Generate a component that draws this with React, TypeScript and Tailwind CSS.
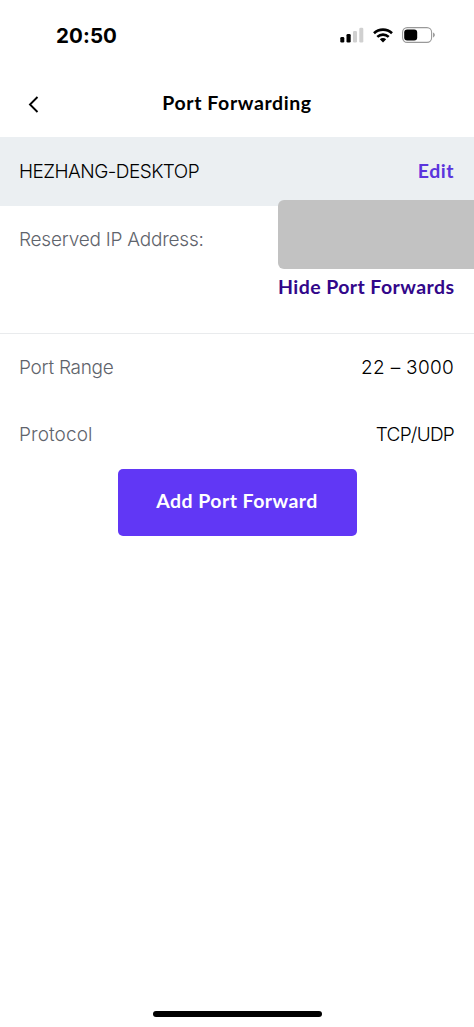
import type { ReactNode } from 'react';

type RowProps = {
  label: string;
  labelClass: string;
  value: string;
  valueClass: string;
};

function StatusBar() {
  return (
    <div className="flex h-[70px] items-center justify-between pl-14 pr-[38px]">
      <span className="pt-px font-['Inter',sans-serif] text-[20.5px] font-bold leading-6 tracking-[0.1px]">
        20:50
      </span>
      <div className="flex items-center">
        <svg width="25" height="16" viewBox="0 0 25 16">
          <rect x="0.3" y="10" width="4" height="5.6" rx="1.3" fill="#000" />
          <rect x="6.5" y="7" width="4.2" height="8.6" rx="1.3" fill="#000" />
          <rect x="13" y="4" width="4" height="11.6" rx="1.3" fill="#d0d0d0" />
          <rect x="19.3" y="0.8" width="4" height="14.8" rx="1.3" fill="#d0d0d0" />
        </svg>
        <svg className="ml-2" width="20" height="15" viewBox="0 0 20 15">
          <g fill="none" stroke="#000" strokeWidth="2.6">
            <path d="M1 5.3C6 0.4 14 0.4 19 5.3" />
            <path d="M4.3 8.9c3.3-3.1 8.1-3.1 11.4 0" />
          </g>
          <path d="M10 14.4L6.8 11.3c1.8-1.6 4.6-1.6 6.4 0z" fill="#000" />
        </svg>
        <svg className="ml-[9px]" width="34" height="16" viewBox="0 0 34 16">
          <rect x="0.6" y="0.6" width="29" height="14.8" rx="4.6" fill="none" stroke="#999" strokeWidth="1.1" />
          <rect x="2.2" y="2.4" width="13" height="11.2" rx="3" fill="#000" />
          <path d="M31.2 5.6c2 0.8 2 4 0 4.8z" fill="#888" />
        </svg>
      </div>
    </div>
  );
}

function Heading({ children, className }: { children: ReactNode; className: string }) {
  return (
    <span className={`whitespace-nowrap font-['Lato',sans-serif] text-[19.5px] font-bold leading-6 ${className}`}>
      {children}
    </span>
  );
}

function Row({ label, labelClass, value, valueClass }: RowProps) {
  return (
    <div className="flex h-[67px] items-center justify-between pl-[19px] pr-5 font-['Inter',sans-serif] text-[19px] font-[340] leading-6">
      <span className={`text-[#5f646c] ${labelClass}`}>{label}</span>
      <span className={valueClass}>{value}</span>
    </div>
  );
}

export default function App() {
  return (
    <div className="flex h-[1027px] w-[474px] flex-col overflow-hidden bg-white text-black">
      <StatusBar />

      <header className="grid h-[67px] grid-cols-[80px_1fr_80px] items-center">
        <button className="pl-[28px] pt-px" aria-label="Back">
          <svg width="11" height="17" viewBox="0 0 11 17" fill="none" stroke="#000" strokeWidth="1.9">
            <path d="M9.5 1L2 8.5L9.5 16" />
          </svg>
        </button>
        <h1 className="text-center">
          <Heading className="tracking-[0.6px]">Port Forwarding</Heading>
        </h1>
      </header>

      <section className="flex h-[69px] items-center justify-between bg-[#ebeff2] pl-[19px] pr-5">
        <span className="pt-px font-['Inter',sans-serif] text-[19px] font-[340] leading-6 tracking-[-0.55px]">
          HEZHANG-DESKTOP
        </span>
        <Heading className="pb-[2px] tracking-[0.5px] text-[#5b35dd]">Edit</Heading>
      </section>

      <section className="flex h-[128px] justify-between border-b border-[#e9ebed] pl-[19px]">
        <span className="pt-[22px] font-['Inter',sans-serif] text-[19px] font-[340] leading-6 tracking-[-0.22px] text-[#5f646c]">
          Reserved IP Address:
        </span>
        <div className="-mt-[6px] flex w-[196px] flex-col">
          <div className="h-[69px] w-full shrink-0 rounded-l-md bg-[#c2c2c2]" />
          <Heading className="mt-[6px] tracking-[0.42px] text-[#32078a]">Hide Port Forwards</Heading>
        </div>
      </section>

      <Row label="Port Range" labelClass="tracking-[-0.27px]" value="22 – 3000" valueClass="tracking-[0.3px]" />
      <Row label="Protocol" labelClass="tracking-[0.1px]" value="TCP/UDP" valueClass="tracking-[-0.75px]" />

      <button className="mt-px h-[67px] w-[239px] self-center rounded-[5px] bg-[#6137f5] pb-[2px] text-white">
        <Heading className="tracking-[0.45px]">Add Port Forward</Heading>
      </button>

      <div className="mb-[10px] mt-auto h-[6px] w-[169px] self-center rounded-full bg-black" />
    </div>
  );
}
